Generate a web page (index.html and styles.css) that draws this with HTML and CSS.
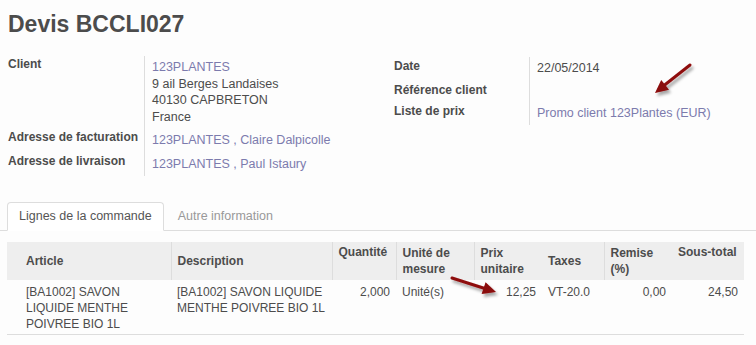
FILE: index.html
```html
<!DOCTYPE html>
<html lang="fr">
<head>
    <meta charset="UTF-8">
    <title>Devis BCCLI027</title>
    <link rel="stylesheet" href="styles.css">
</head>
<body>

    <!-- Header of the quotation -->
    <div class="sheet">
        <h1 class="title">Devis BCCLI027</h1>

        <div class="groups">
            <div class="group">
                <div class="label">Client</div>
                <div class="value">
                    <a class="link">123PLANTES</a><br>
                    9 ail Berges Landaises<br>
                    40130 CAPBRETON<br>
                    France
                </div>
                <div class="label">Adresse de facturation</div>
                <div class="value"><a class="link">123PLANTES , Claire Dalpicolle</a></div>
                <div class="label">Adresse de livraison</div>
                <div class="value"><a class="link">123PLANTES , Paul Istaury</a></div>
            </div>

            <div class="group right">
                <div class="label">Date</div>
                <div class="value">22/05/2014</div>
                <div class="label">Référence client</div>
                <div class="value empty"></div>
                <div class="label">Liste de prix</div>
                <div class="value"><a class="link">Promo client 123Plantes (EUR)</a></div>
            </div>
        </div>
    </div>

    <!-- Tabs -->
    <ul class="tabs">
        <li class="tab active">Lignes de la commande</li>
        <li class="tab">Autre information</li>
    </ul>

    <!-- Order lines -->
    <table class="lines">
        <colgroup>
            <col style="width:164px">
            <col style="width:161px">
            <col style="width:64px">
            <col style="width:78px">
            <col style="width:68px">
            <col style="width:62px">
            <col style="width:68px">
            <col style="width:72px">
        </colgroup>
        <thead>
            <tr>
                <th class="first">Article</th>
                <th class="sep">Description</th>
                <th class="sep top">Quantité</th>
                <th class="sep">Unité de mesure</th>
                <th class="sep">Prix unitaire</th>
                <th>Taxes</th>
                <th class="sep">Remise (%)</th>
                <th class="top">Sous-total</th>
            </tr>
        </thead>
        <tbody>
            <tr>
                <td class="first">[BA1002] SAVON LIQUIDE MENTHE POIVREE BIO 1L</td>
                <td>[BA1002] SAVON LIQUIDE MENTHE POIVREE BIO 1L</td>
                <td class="num">2,000</td>
                <td>Unité(s)</td>
                <td class="num">12,25</td>
                <td>VT-20.0</td>
                <td class="num">0,00</td>
                <td class="num">24,50</td>
            </tr>
        </tbody>
    </table>

    <!-- Annotation arrows -->
    <svg class="arrow arrow-price" width="60" height="50" viewBox="0 0 60 50">
        <defs>
            <filter id="shadow1" x="-30%" y="-30%" width="170%" height="170%">
                <feDropShadow dx="2" dy="3" stdDeviation="1.6" flood-color="#000" flood-opacity="0.35"/>
            </filter>
        </defs>
        <g filter="url(#shadow1)">
            <line x1="45" y1="7" x2="19" y2="27.5" stroke="#8e0b0b" stroke-width="3" stroke-linecap="round"/>
            <polygon points="10,35 24,31.8 16.2,22" fill="#8a0808"/>
        </g>
    </svg>

    <svg class="arrow arrow-unit" width="64" height="36" viewBox="0 0 64 36">
        <defs>
            <filter id="shadow2" x="-30%" y="-30%" width="170%" height="190%">
                <feDropShadow dx="2" dy="3" stdDeviation="1.6" flood-color="#000" flood-opacity="0.35"/>
            </filter>
        </defs>
        <g filter="url(#shadow2)">
            <line x1="7" y1="8" x2="39" y2="18.2" stroke="#8e0b0b" stroke-width="3" stroke-linecap="round"/>
            <polygon points="51,22 36.6,24 40.6,12.2" fill="#8a0808"/>
        </g>
    </svg>

</body>
</html>
```

FILE: styles.css
```css
/* Global Styles */
* {
    box-sizing: border-box;
}

body {
    margin: 0;
    position: relative;
    background: #fdfdfd;
    font-family: "Liberation Sans", Arial, sans-serif;
    font-size: 12px;
    color: #4c4c4c;
    overflow: hidden;
}

/* Quotation header */
.sheet {
    padding: 10px 8px 0;
}

.title {
    margin: 0;
    font-size: 23px;
    line-height: 28px;
    font-weight: bold;
    color: #4c4c4c;
}

.groups {
    display: flex;
    margin-top: 18px;
}

.group {
    width: 386px;
    display: grid;
    grid-template-columns: 136px 1fr;
    align-content: start;
}

.group.right {
    width: auto;
    flex: 1;
    grid-template-columns: 135px 1fr;
    margin-top: 1px;
}

.label {
    font-weight: bold;
    line-height: 16.5px;
}

.group.right .label {
    padding-top: 1px;
}

.value {
    border-left: 1px solid #ddd;
    padding: 3px 0 4px 7px;
    font-size: 12.5px;
    line-height: 16.5px;
}

.value.empty {
    height: 21px;
}

.link {
    color: #7c7bad;
    text-decoration: none;
}

/* Tabs */
.tabs {
    display: flex;
    list-style: none;
    margin: 26px 0 0;
    padding: 0 0 0 7px;
    border-bottom: 1px solid #ddd;
}

.tab {
    padding: 0 11px;
    margin: 0 2px -1px 0;
    font-size: 12.5px;
    line-height: 27px;
    color: #999;
    border: 1px solid transparent;
    border-radius: 4px 4px 0 0;
}

.tab.active {
    color: #555;
    background: #fff;
    border-color: #ddd;
    border-bottom-color: #fff;
}

/* Order lines */
.lines {
    margin: 11px 0 0 7px;
    width: 737px;
    table-layout: fixed;
    border-collapse: collapse;
}

.lines th {
    height: 38px;
    padding: 0 6px;
    background: #eee;
    font-weight: bold;
    text-align: left;
    vertical-align: middle;
    line-height: 16px;
}

.lines th.sep {
    border-left: 1px solid #ddd;
}

.lines th.top {
    vertical-align: top;
    padding-top: 2px;
}

.lines td {
    padding: 4px 6px 2px;
    vertical-align: top;
    line-height: 16px;
    border-bottom: 1px solid #ddd;
}

.lines .first {
    padding-left: 19px;
}

.lines td.num {
    text-align: right;
}

/* Arrows */
.arrow {
    position: absolute;
    pointer-events: none;
}

.arrow-price {
    left: 645px;
    top: 58px;
}

.arrow-unit {
    left: 445px;
    top: 270px;
}
```
